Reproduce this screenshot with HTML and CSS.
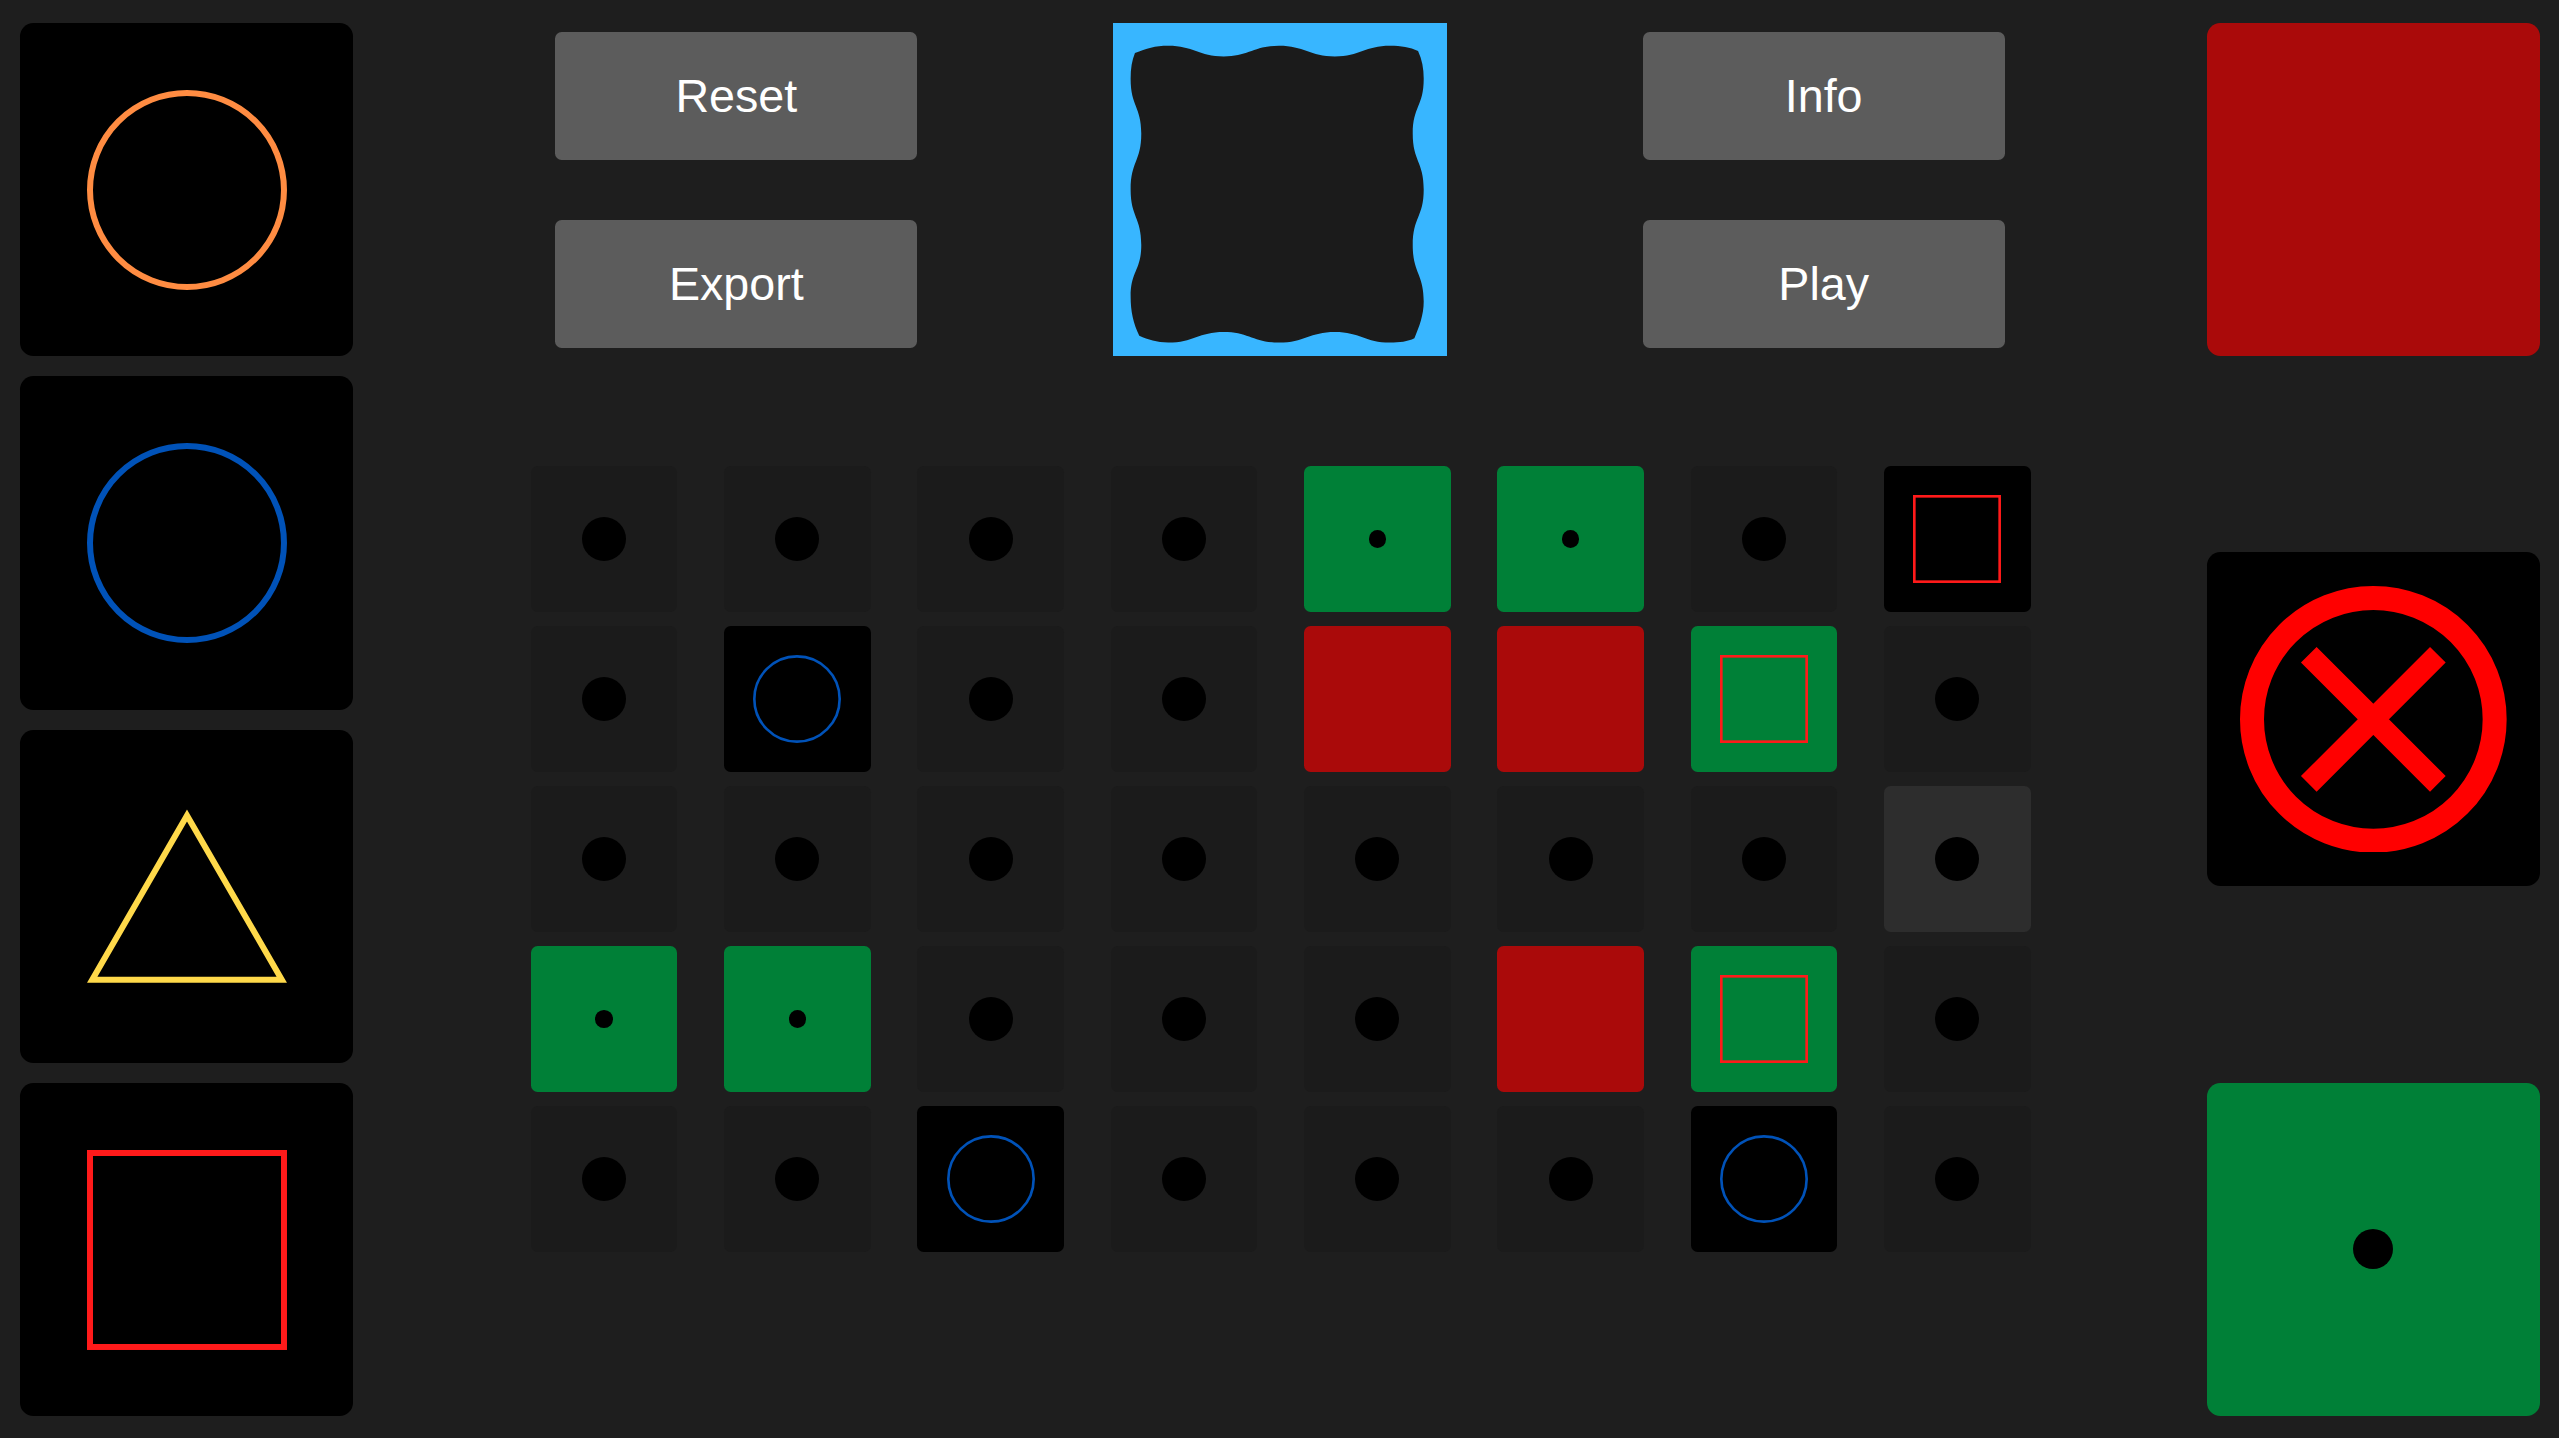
FILE: index.html
```html
<!DOCTYPE html>
<html lang="en">
<head>
<meta charset="utf-8">
<title>Shape board</title>
<link rel="stylesheet" href="styles.css">
</head>
<body>
<svg class="defs" width="0" height="0" aria-hidden="true">
  <defs>
    <symbol id="circle" viewBox="0 0 100 100"><circle cx="50" cy="50" r="48.5" fill="none" stroke="currentColor" stroke-width="3"/></symbol>
    <symbol id="square" viewBox="0 0 100 100"><rect x="1.5" y="1.5" width="97" height="97" fill="none" stroke="currentColor" stroke-width="3"/></symbol>
    <symbol id="triangle" viewBox="0 0 100 100"><polygon points="50,9.7 2.6,91.85 97.4,91.85" fill="none" stroke="currentColor" stroke-width="3"/></symbol>
  </defs>
</svg>
<main class="app">
  <aside class="col">
    <div class="card black"><svg class="shape orange"><use href="#circle"/></svg></div>
    <div class="card black"><svg class="shape blue"><use href="#circle"/></svg></div>
    <div class="card black"><svg class="shape yellow"><use href="#triangle"/></svg></div>
    <div class="card black"><svg class="shape crimson"><use href="#square"/></svg></div>
  </aside>
  <section class="center">
    <div class="top">
      <div class="btns">
        <button class="btn">Reset</button>
        <button class="btn">Export</button>
      </div>
      <div class="frame">
        <svg class="wave" viewBox="99 69 1002 999" aria-hidden="true">
          <path d="M165 158C200 144 225 136 265 136C340 136 357 168 432 168C507 168 523 136 598 136C673 136 691 168 766 168C841 168 857 136 932 136C965 136 992 140 1016 152C1028 178 1033 205 1033 235C1033 318 1000 318 1000 400C1000 484 1033 484 1033 568C1033 651 1000 651 1000 735C1000 820 1033 820 1033 905C1033 945 1020 980 1005 1015C985 1025 960 1028 932 1028C857 1028 841 996 766 996C691 996 673 1028 598 1028C523 1028 507 996 432 996C357 996 340 1028 265 1028C230 1028 205 1020 178 1008C160 970 152 935 152 890C152 812 184 812 184 735C184 651 152 651 152 568C152 484 184 484 184 400C184 318 152 318 152 235C152 205 156 180 165 158Z"/>
        </svg>
      </div>
      <div class="btns">
        <button class="btn">Info</button>
        <button class="btn">Play</button>
      </div>
    </div>
    <div class="grid">
      <div class="cell"><i class="dot"></i></div>
      <div class="cell"><i class="dot"></i></div>
      <div class="cell"><i class="dot"></i></div>
      <div class="cell"><i class="dot"></i></div>
      <div class="cell green"><i class="dot small"></i></div>
      <div class="cell green"><i class="dot small"></i></div>
      <div class="cell"><i class="dot"></i></div>
      <div class="cell black"><svg class="shape crimson"><use href="#square"/></svg></div>

      <div class="cell"><i class="dot"></i></div>
      <div class="cell black"><svg class="shape blue"><use href="#circle"/></svg></div>
      <div class="cell"><i class="dot"></i></div>
      <div class="cell"><i class="dot"></i></div>
      <div class="cell red"></div>
      <div class="cell red"></div>
      <div class="cell green"><svg class="shape crimson"><use href="#square"/></svg></div>
      <div class="cell"><i class="dot"></i></div>

      <div class="cell"><i class="dot"></i></div>
      <div class="cell"><i class="dot"></i></div>
      <div class="cell"><i class="dot"></i></div>
      <div class="cell"><i class="dot"></i></div>
      <div class="cell"><i class="dot"></i></div>
      <div class="cell"><i class="dot"></i></div>
      <div class="cell"><i class="dot"></i></div>
      <div class="cell hover"><i class="dot"></i></div>

      <div class="cell green"><i class="dot small"></i></div>
      <div class="cell green"><i class="dot small"></i></div>
      <div class="cell"><i class="dot"></i></div>
      <div class="cell"><i class="dot"></i></div>
      <div class="cell"><i class="dot"></i></div>
      <div class="cell red"></div>
      <div class="cell green"><svg class="shape crimson"><use href="#square"/></svg></div>
      <div class="cell"><i class="dot"></i></div>

      <div class="cell"><i class="dot"></i></div>
      <div class="cell"><i class="dot"></i></div>
      <div class="cell black"><svg class="shape blue"><use href="#circle"/></svg></div>
      <div class="cell"><i class="dot"></i></div>
      <div class="cell"><i class="dot"></i></div>
      <div class="cell"><i class="dot"></i></div>
      <div class="cell black"><svg class="shape blue"><use href="#circle"/></svg></div>
      <div class="cell"><i class="dot"></i></div>
    </div>
  </section>
  <aside class="col spread">
    <div class="card red"></div>
    <div class="card black mid">
      <svg class="cross" viewBox="0 0 100 100" aria-hidden="true">
        <circle cx="50" cy="50" r="45.5" fill="none" stroke="#ff0000" stroke-width="9"/>
        <path d="M25.8 25.8L74.2 74.2M74.2 25.8L25.8 74.2" fill="none" stroke="#ff0000" stroke-width="8.3"/>
      </svg>
    </div>
    <div class="card green"><i class="dot large"></i></div>
  </aside>
</main>
</body>
</html>
```
FILE: styles.css
```css
* {
  box-sizing: border-box;
}

html,
body {
  margin: 0;
  height: 100%;
  background: #1e1e1e;
}

.defs {
  position: absolute;
}

.app {
  display: flex;
  justify-content: space-between;
  height: 1438px;
  padding: 23px 19px 22px 20px;
  overflow: hidden;
}

.col {
  display: flex;
  flex-direction: column;
  gap: 20px;
  width: 333.33px;
  flex: none;
}

.col.spread {
  gap: 0;
  justify-content: space-between;
}

.card {
  display: flex;
  align-items: center;
  justify-content: center;
  width: 333.33px;
  height: 333.33px;
  border-radius: 13.33px;
  flex: none;
}

.card.mid {
  margin-bottom: 1px;
}

.center {
  flex: 1;
  display: flex;
  flex-direction: column;
}

.top {
  display: flex;
  justify-content: center;
  gap: 196px;
  height: 333.33px;
  flex: none;
}

.btns {
  display: flex;
  flex-direction: column;
  gap: 60px;
  padding-top: 9px;
}

.btn {
  width: 362px;
  height: 128px;
  padding: 0;
  border: 0;
  border-radius: 6.67px;
  background: #5c5c5c;
  color: #fff;
  font: 46.67px "Liberation Sans", Arial, sans-serif;
}

.frame {
  width: 333.33px;
  height: 333.33px;
  background: #38b6ff;
  flex: none;
}

.wave {
  display: block;
  width: 100%;
  height: 100%;
  fill: #1b1b1b;
}

.grid {
  display: grid;
  grid-template-columns: repeat(8, 146.67px);
  grid-auto-rows: 146.67px;
  gap: 13.33px 46.67px;
  justify-content: center;
  margin: 109.3px 0 0 1.3px;
}

.cell {
  display: flex;
  align-items: center;
  justify-content: center;
  border-radius: 6.67px;
  background: #1b1b1b;
}

.black {
  background: #000;
}

.green {
  background: #008037;
}

.red {
  background: #aa0a0a;
}

.hover {
  background: #2d2d2d;
}

.dot {
  display: block;
  width: 30%;
  height: 30%;
  border-radius: 50%;
  background: #000;
}

.dot.small,
.dot.large {
  width: 12%;
  height: 12%;
}

.shape {
  display: block;
  width: 60%;
  height: 60%;
}

.cross {
  display: block;
  width: 80%;
  height: 80%;
}

.orange {
  color: #ff8c42;
}

.blue {
  color: #0052b8;
}

.yellow {
  color: #ffd94a;
}

.crimson {
  color: #ff1a1a;
}
```
